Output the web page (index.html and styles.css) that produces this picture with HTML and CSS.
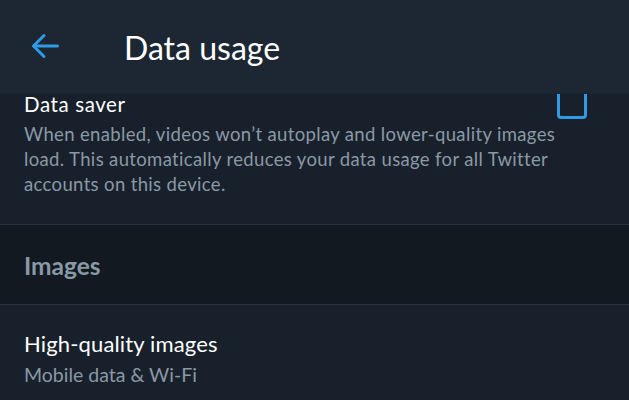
FILE: index.html
```html
<!DOCTYPE html>
<html lang="en">
<head>
<meta charset="utf-8">
<title>Data usage</title>
<link rel="stylesheet" href="styles.css">
</head>
<body>
<header class="appbar">
  <button class="back" aria-label="Back">
    <svg width="28" height="26" viewBox="0 0 28 26" fill="none" stroke="#2f9be6" stroke-width="3" stroke-linecap="round" stroke-linejoin="round">
      <path d="M26.5 13H3"/>
      <path d="M13 2.5L2.5 13L13 23.5"/>
    </svg>
  </button>
  <h1 class="title">Data usage</h1>
</header>
<main class="content">
  <section class="row row-saver">
    <div class="row-text">
      <div class="row-title saver-title">Data saver</div>
      <p class="row-desc">When enabled, videos won’t autoplay and lower-quality images load. This automatically reduces your data usage for all Twitter accounts on this device.</p>
    </div>
    <span class="checkbox" aria-hidden="true"></span>
  </section>
  <div class="section-head">Images</div>
  <section class="row row-images">
    <div class="row-text">
      <div class="row-title hq-title">High-quality images</div>
      <div class="row-sub">Mobile data &amp; Wi-Fi</div>
    </div>
  </section>
</main>
</body>
</html>
```

FILE: styles.css
```css
* { box-sizing: border-box; }
html, body {
  margin: 0;
  padding: 0;
  background: #18212b;
  font-family: Lato, "Noto Sans", sans-serif;
  overflow: hidden;
  height: 400px;
}
.appbar {
  position: fixed;
  top: 0;
  left: 0;
  right: 0;
  height: 94px;
  background: #1c2733;
  display: flex;
  align-items: center;
  padding-left: 31px;
  z-index: 2;
}
.back {
  background: none;
  border: 0;
  padding: 0;
  width: 30px;
  height: 26px;
  display: flex;
  align-items: center;
  margin-top: -2px;
}
.title {
  margin: 0 0 0 63px;
  font-size: 32px;
  font-weight: 400;
  color: #ffffff;
}
.content {
  padding-top: 91px;
}
.row {
  display: flex;
  padding: 0 24px;
}
.row-text {
  flex: 1;
  min-width: 0;
}
.row-saver {
  padding-bottom: 27px;
  border-bottom: 1px solid #2a343f;
}
.row-title {
  color: #ffffff;
}
.saver-title {
  font-size: 20.5px;
  line-height: 26px;
  letter-spacing: 0.6px;
}
.row-desc {
  margin: 5px 0 0;
  color: #8b98a5;
  font-size: 18.5px;
  line-height: 25px;
  letter-spacing: 0.35px;
}
.checkbox {
  width: 30px;
  height: 30px;
  border: 3px solid #2f9be6;
  border-radius: 4px;
  margin-top: -2px;
  margin-right: 18px;
  flex: none;
}
.section-head {
  height: 80px;
  display: flex;
  align-items: center;
  padding: 1px 24px 0;
  background: #121920;
  border-bottom: 1px solid #2a343f;
  color: #8899a6;
  font-size: 24.5px;
  font-weight: 700;
}
.row-images {
  padding-top: 25px;
}
.hq-title {
  font-size: 22px;
  line-height: 28px;
  letter-spacing: 0.15px;
}
.row-sub {
  color: #8b98a5;
  font-size: 19.5px;
  line-height: 25px;
  letter-spacing: 0;
  margin-top: 4px;
}
```
